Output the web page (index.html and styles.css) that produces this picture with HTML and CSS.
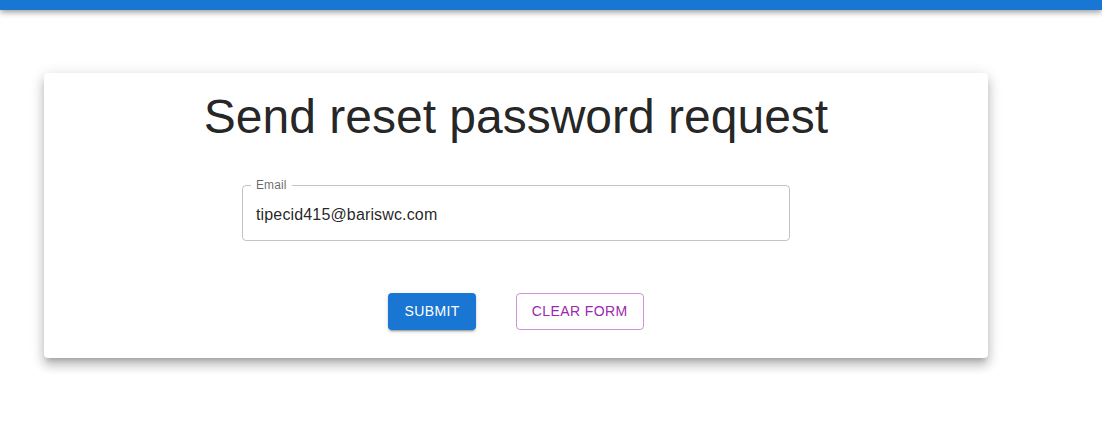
FILE: index.html
```html
<!DOCTYPE html>
<html>
<head>
<meta charset="utf-8">
<link rel="stylesheet" href="styles.css">
</head>
<body>
<div class="topbar"></div>
<main class="page">
  <section class="card">
    <h1 class="title">Send reset password request</h1>
    <div class="field">
      <fieldset class="outline"><legend class="legend"><span>Email</span></legend></fieldset>
      <label class="label">Email</label>
      <input class="input" type="text" value="tipecid415@bariswc.com">
    </div>
    <div class="actions">
      <button class="btn btn-contained">Submit</button>
      <button class="btn btn-outlined">Clear form</button>
    </div>
  </section>
</main>
</body>
</html>
```
FILE: styles.css
```css
* { box-sizing: border-box; }
html, body { margin: 0; padding: 0; background: #fff; }
body {
  font-family: "Liberation Sans", Arial, Helvetica, sans-serif;
  color: rgba(0,0,0,0.87);
  width: 1102px;
  height: 437px;
  overflow: hidden;
}
.topbar {
  height: 10px;
  background: #1976d2;
  box-shadow: 0px 2px 4px -1px rgba(0,0,0,0.2), 0px 4px 5px 0px rgba(0,0,0,0.14), 0px 1px 10px 0px rgba(0,0,0,0.12);
  position: relative;
  z-index: 2;
}
.page {
  padding-top: 63px;
  padding-left: 44px;
}
.card {
  width: 944px;
  height: 285px;
  background: #fff;
  border-radius: 4px;
  box-shadow: 0px 5px 5px -3px rgba(0,0,0,0.2), 0px 8px 10px 1px rgba(0,0,0,0.14), 0px 3px 14px 2px rgba(0,0,0,0.12);
  padding-top: 16px;
  display: flex;
  flex-direction: column;
  align-items: center;
}
.title {
  margin: 0;
  font-size: 48px;
  font-weight: 400;
  line-height: 56px;
  color: rgba(0,0,0,0.87);
  text-align: center;
}
.field {
  position: relative;
  width: 548px;
  height: 56px;
  margin-top: 40px;
}
.outline {
  position: absolute;
  inset: -5px 0 0 0;
  margin: 0;
  padding: 0 8px;
  border: 1px solid rgba(0,0,0,0.23);
  border-radius: 4px;
  pointer-events: none;
}
.legend {
  font-size: 12px;
  letter-spacing: 0.00938em;
  padding: 0;
  height: 11px;
  visibility: hidden;
  max-width: 100%;
  white-space: nowrap;
}
.legend span { padding: 0 5px; }
.label {
  position: absolute;
  left: 14px;
  top: -7px;
  font-size: 12px;
  line-height: 14px;
  letter-spacing: 0.00938em;
  color: rgba(0,0,0,0.6);
}
.input {
  width: 100%;
  height: 56px;
  border: 0;
  outline: 0;
  background: transparent;
  padding: 18px 14px 15px;
  font-family: inherit;
  font-size: 16px;
  letter-spacing: 0.00938em;
  color: rgba(0,0,0,0.87);
}
.actions {
  display: flex;
  gap: 40px;
  margin-top: 52px;
}
.btn {
  font-family: inherit;
  font-size: 14px;
  font-weight: 500;
  letter-spacing: 0.02857em;
  text-transform: uppercase;
  line-height: 24.5px;
  border-radius: 4px;
  min-width: 64px;
  cursor: pointer;
}
.btn-contained {
  background: #1976d2;
  color: #fff;
  border: 0;
  padding: 6px 16px;
  box-shadow: 0px 3px 1px -2px rgba(0,0,0,0.2), 0px 2px 2px 0px rgba(0,0,0,0.14), 0px 1px 5px 0px rgba(0,0,0,0.12);
}
.btn-outlined {
  background: transparent;
  color: #9c27b0;
  border: 1px solid rgba(156,39,176,0.5);
  padding: 5px 15px;
}
```
